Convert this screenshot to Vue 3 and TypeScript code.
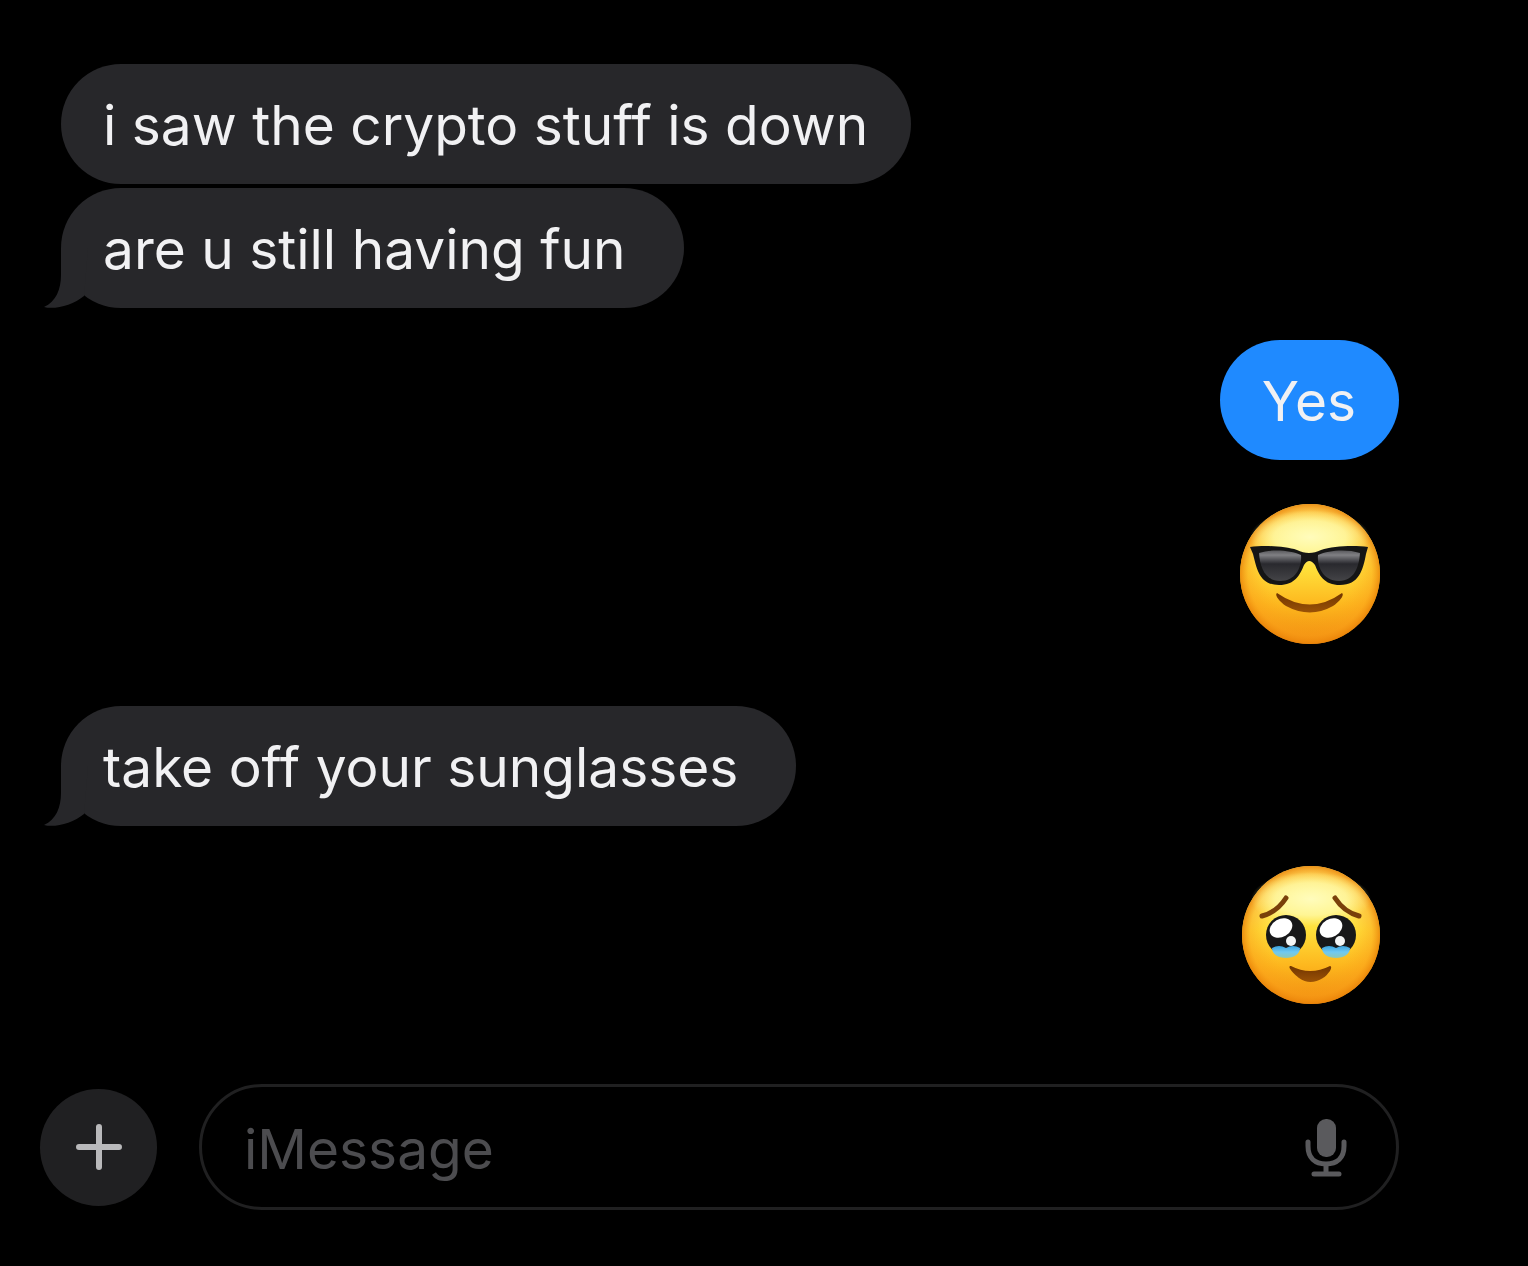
<script setup lang="ts">
import { ref } from 'vue'

type Message = {
  id: number
  from: 'them' | 'me'
  kind: 'text' | 'cool' | 'tears'
  text: string
  tail?: boolean
  gap: 'none' | 'tight' | 'normal' | 'emoji' | 'wide' | 'reply'
}

const messages: Message[] = [
  { id: 1, from: 'them', kind: 'text', text: 'i saw the crypto stuff is down', gap: 'none' },
  { id: 2, from: 'them', kind: 'text', text: 'are u still having fun', tail: true, gap: 'tight' },
  { id: 3, from: 'me', kind: 'text', text: 'Yes', gap: 'normal' },
  { id: 4, from: 'me', kind: 'cool', text: 'Smiling face with sunglasses', gap: 'emoji' },
  { id: 5, from: 'them', kind: 'text', text: 'take off your sunglasses', tail: true, gap: 'wide' },
  { id: 6, from: 'me', kind: 'tears', text: 'Face holding back tears', gap: 'reply' },
]

const draft = ref('')
</script>

<template>
  <main class="chat">
    <svg class="defs" width="0" height="0" aria-hidden="true">
      <defs>
        <linearGradient id="face" x1="0" y1="0" x2="0" y2="1">
          <stop offset="0" stop-color="#ffe870" />
          <stop offset="0.2" stop-color="#fff07a" />
          <stop offset="0.46" stop-color="#ffe03a" />
          <stop offset="0.72" stop-color="#fdb71e" />
          <stop offset="1" stop-color="#ef8a0e" />
        </linearGradient>
        <radialGradient id="rim" cx="0.5" cy="0.5" r="0.5">
          <stop offset="0.6" stop-color="#fba21a" stop-opacity="0" />
          <stop offset="0.88" stop-color="#fa9c18" stop-opacity="0.45" />
          <stop offset="1" stop-color="#e98208" stop-opacity="0.85" />
        </radialGradient>
        <radialGradient id="shine" cx="0.5" cy="0.5" r="0.5">
          <stop offset="0" stop-color="#fffcbc" />
          <stop offset="0.6" stop-color="#fff9a4" stop-opacity="0.8" />
          <stop offset="1" stop-color="#fff68c" stop-opacity="0" />
        </radialGradient>
        <linearGradient id="lens" x1="0" y1="0" x2="0" y2="1">
          <stop offset="0" stop-color="#59595d" />
          <stop offset="0.15" stop-color="#808084" />
          <stop offset="0.34" stop-color="#46464b" />
          <stop offset="0.44" stop-color="#29292e" />
          <stop offset="1" stop-color="#444447" />
        </linearGradient>
        <linearGradient id="mouth" x1="0" y1="0" x2="0" y2="1">
          <stop offset="0" stop-color="#713500" />
          <stop offset="1" stop-color="#9b5206" />
        </linearGradient>
        <linearGradient id="tear" x1="0" y1="0" x2="0" y2="1">
          <stop offset="0" stop-color="#3ba4df" />
          <stop offset="0.5" stop-color="#70c9f3" />
          <stop offset="1" stop-color="#8fc8b4" />
        </linearGradient>
      </defs>
    </svg>

    <ol class="thread">
      <li v-for="m in messages" :key="m.id" class="row" :class="[m.from, 'gap-' + m.gap]">
        <div v-if="m.kind === 'text'" class="bubble" :class="{ tailed: m.tail }">
          <svg v-if="m.tail" class="tail" viewBox="0 0 44 60" aria-hidden="true">
            <path d="M17 0V27C17 41 12 54 0 59C11 62 29 57 40 48L44 0Z" />
          </svg>
          {{ m.text }}
        </div>

        <svg v-else-if="m.kind === 'cool'" class="emoji" viewBox="0 0 140 140" role="img" :aria-label="m.text">
          <circle cx="70" cy="70" r="70" fill="url(#face)" />
          <circle cx="70" cy="70" r="70" fill="url(#rim)" />
          <ellipse cx="70" cy="33" rx="60" ry="27" fill="url(#shine)" />
          <path
            d="M10 43C24 41 45 42 57 46C65 50 73 50 81 46C93 42 114 41 128 43L126 50C123 66 119 81 100 81C84 81 79 71 75 61Q69 53 64 61C60 71 55 81 39 81C20 81 17 66 13 50Z"
            fill="#151515"
          />
          <path d="M19 49C32 45 50 46 61 51C62 61 57 77 40 77C25 77 20 63 19 49Z" fill="url(#lens)" />
          <path d="M120 49C107 45 89 46 78 51C77 61 82 77 99 77C114 77 119 63 120 49Z" fill="url(#lens)" />
          <path d="M37 89Q70 112 102 89C105 91 99 98 93 102Q70 115 46 102C40 98 34 91 37 89Z" fill="url(#mouth)" />
        </svg>

        <svg v-else class="emoji" viewBox="0 0 140 140" role="img" :aria-label="m.text">
          <circle cx="71" cy="69" r="69" fill="url(#face)" />
          <circle cx="71" cy="69" r="69" fill="url(#rim)" />
          <ellipse cx="71" cy="33" rx="60" ry="27" fill="url(#shine)" />
          <path d="M22 50Q37 46 46 32" class="brow" />
          <path d="M119 50Q104 46 95 32" class="brow" />
          <circle cx="46" cy="69" r="20" fill="#171819" />
          <circle cx="96" cy="69" r="20" fill="#171819" />
          <ellipse cx="41" cy="62" rx="12" ry="9" fill="#fff" transform="rotate(-30 41 62)" />
          <ellipse cx="91" cy="62" rx="12" ry="9" fill="#fff" transform="rotate(-30 91 62)" />
          <circle cx="51" cy="75" r="5" fill="#f3f5f5" />
          <circle cx="100" cy="75" r="5" fill="#f3f5f5" />
          <path d="M32 82Q39 78 46 82Q53 78 60 82C60 88 54 92 46 92C38 92 32 88 32 82Z" fill="url(#tear)" />
          <path d="M82 82Q89 78 96 82Q103 78 110 82C110 88 104 92 96 92C88 92 82 88 82 82Z" fill="url(#tear)" />
          <path d="M51 100Q70 110 90 100C94 101 87 110 83 112Q70 120 59 112C54 108 46 100 51 100Z" fill="url(#mouth)" />
        </svg>
      </li>
    </ol>

    <form class="composer" @submit.prevent>
      <button class="add" type="button" aria-label="Add attachment">
        <svg viewBox="0 0 46 46" width="46" height="46" aria-hidden="true">
          <path d="M23 3V43M3 23H43" />
        </svg>
      </button>
      <div class="field">
        <input v-model="draft" type="text" placeholder="iMessage" aria-label="iMessage" />
        <button class="mic" type="button" aria-label="Record audio">
          <svg viewBox="0 0 42 60" width="42" height="60" aria-hidden="true">
            <rect x="12" y="0" width="19" height="38" rx="9" fill="#5a5a5d" />
            <path d="M3 23V27C3 39 10 45 21 45S39 39 39 27V23M21 45V55M9 55H34" />
          </svg>
        </button>
      </div>
    </form>
  </main>
</template>

<style>
body {
  background: #000;
}
</style>

<style scoped>
.chat {
  box-sizing: border-box;
  min-height: 100vh;
  padding: 64px 129px 56px 40px;
  background: #000;
  color: #f1f1f3;
  font-family: Inter, 'Liberation Sans', sans-serif;
  font-size: 55px;
  line-height: 68px;
}

.defs {
  position: absolute;
}

.thread {
  display: flex;
  flex-direction: column;
  margin: 0;
  padding: 0 0 0 21px;
  list-style: none;
}

.row {
  display: flex;
}

.me {
  justify-content: flex-end;
}

.gap-tight {
  margin-top: 4px;
}

.gap-normal {
  margin-top: 32px;
}

.gap-emoji {
  margin-top: 44px;
}

.gap-wide {
  margin-top: 62px;
}

.gap-reply {
  margin-top: 40px;
}

.bubble {
  position: relative;
  padding: 27px 43px 25px 42px;
  border-radius: 60px;
  background: #27272a;
}

.tailed {
  padding-right: 58px;
}

.me .bubble {
  background: #1f8aff;
}

.tail {
  position: absolute;
  bottom: 0;
  left: -17px;
  width: 44px;
  height: 60px;
  fill: #27272a;
}

.emoji {
  width: 140px;
  height: 140px;
  margin-right: 19px;
}

.brow {
  fill: none;
  stroke: #79400a;
  stroke-width: 5;
  stroke-linecap: round;
}

.composer {
  display: flex;
  align-items: center;
  gap: 42px;
  margin-top: 78px;
}

button {
  display: flex;
  align-items: center;
  justify-content: center;
  flex: none;
  padding: 0;
  border: 0;
  background: none;
}

button svg {
  fill: none;
  stroke-linecap: round;
}

.add {
  width: 117px;
  height: 117px;
  border-radius: 50%;
  background: #202022;
}

.add path {
  stroke: #b9b9bb;
  stroke-width: 6;
}

.field {
  display: flex;
  flex: 1;
  align-items: center;
  min-width: 0;
  box-sizing: border-box;
  height: 126px;
  padding: 4px 49px 0 42px;
  border: 3px solid #202021;
  border-radius: 63px;
}

input {
  flex: 1;
  min-width: 0;
  height: 68px;
  padding: 0;
  border: 0;
  outline: 0;
  background: none;
  color: #f1f1f3;
  font: inherit;
}

input::placeholder {
  color: #4c4c4f;
  opacity: 1;
}

.mic path {
  stroke: #5a5a5d;
  stroke-width: 5;
}
</style>
